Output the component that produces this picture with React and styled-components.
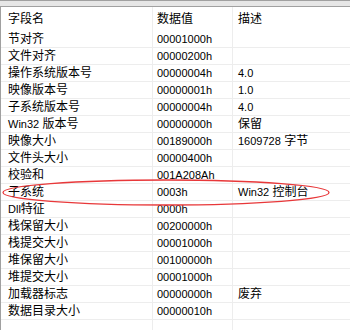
import React from 'react'
import styled, { createGlobalStyle } from 'styled-components'

const rows = [
    ['节对齐', '00001000h', ''],
    ['文件对齐', '00000200h', ''],
    ['操作系统版本号', '00000004h', '4.0'],
    ['映像版本号', '00000001h', '1.0'],
    ['子系统版本号', '00000004h', '4.0'],
    [['Win32', ' 版本号'], '00000000h', '保留'],
    ['映像大小', '00189000h', ['1609728', ' 字节']],
    ['文件头大小', '00000400h', ''],
    ['校验和', '001A208Ah', ''],
    ['子系统', '0003h', ['Win32', ' 控制台']],
    [['Dll', '特征'], '0000h', ''],
    ['栈保留大小', '00200000h', ''],
    ['栈提交大小', '00001000h', ''],
    ['堆保留大小', '00100000h', ''],
    ['堆提交大小', '00001000h', ''],
    ['加载器标志', '00000000h', '废弃'],
    ['数据目录大小', '00000010h', ''],
]

const Text = ({ value }) => {
    if (Array.isArray(value)) {
        return <>{<Lat>{value[0]}</Lat>}{value[1]}</>
    }
    if (/^[0-9A-Za-z.]+$/.test(value)) return <Lat>{value}</Lat>
    return value
}

const App = () => {
    return (
        <Page>
            <GlobalStyle />
            <TopStrip />
            <Table>
                <Row $header>
                    <Cell $col={0}>字段名</Cell>
                    <Cell $col={1}>数据值</Cell>
                    <Cell $col={2}>描述</Cell>
                </Row>
                {rows.map((r, i) => (
                    <Row key={i}>
                        <Cell $col={0}><Text value={r[0]} /></Cell>
                        <Cell $col={1}><Text value={r[1]} /></Cell>
                        <Cell $col={2}><Text value={r[2]} /></Cell>
                    </Row>
                ))}
                <Row $filler>
                    <Cell $col={0} />
                    <Cell $col={1} />
                    <Cell $col={2} />
                </Row>
                <Mark viewBox="0 0 349 323" width="349" height="323">
                    <ellipse cx="165" cy="185.5" rx="163" ry="12.5" fill="none" stroke="#e8383a" strokeWidth="1.3" />
                </Mark>
            </Table>
        </Page>
    )
}

export default App

const GlobalStyle = createGlobalStyle`
    html, body {
        margin: 0;
        padding: 0;
        background: #ffffff;
    }
    body {
        font-family: "Liberation Sans", "Noto Sans CJK SC", sans-serif;
        font-size: 12px;
        color: #000000;
    }
`

const Page = styled.div`
    width: 350px;
    height: 330px;
    overflow: hidden;
    display: flex;
    flex-direction: column;
`

const TopStrip = styled.div`
    height: 5px;
    background: #e6e6e6;
    border-top: 1px solid #a0a0a0;
    border-bottom: 1px solid #a0a0a0;
    flex-shrink: 0;
`

const Table = styled.div`
    position: relative;
    flex: 1;
    border-left: 1px solid #a0a0a0;
    display: flex;
    flex-direction: column;
`

const Row = styled.div`
    display: grid;
    grid-template-columns: 152px 80px 1fr;
    height: ${p => (p.$header ? '24px' : p.$filler ? 'auto' : '16px')};
    flex: ${p => (p.$filler ? 1 : 'none')};
    border-bottom: ${p => (p.$header || p.$filler ? 'none' : '1px solid #ededed')};
    line-height: ${p => (p.$header ? '25px' : '17px')};
`

const Cell = styled.div`
    padding-left: ${p => [7, 4, 5][p.$col]}px;
    border-right: ${p => (p.$col < 2 ? '1px solid #ededed' : 'none')};
    white-space: nowrap;
    overflow: hidden;
`

const Lat = styled.span`
    font-size: 11px;
`

const Mark = styled.svg`
    position: absolute;
    left: 0;
    top: 0;
    pointer-events: none;
`
